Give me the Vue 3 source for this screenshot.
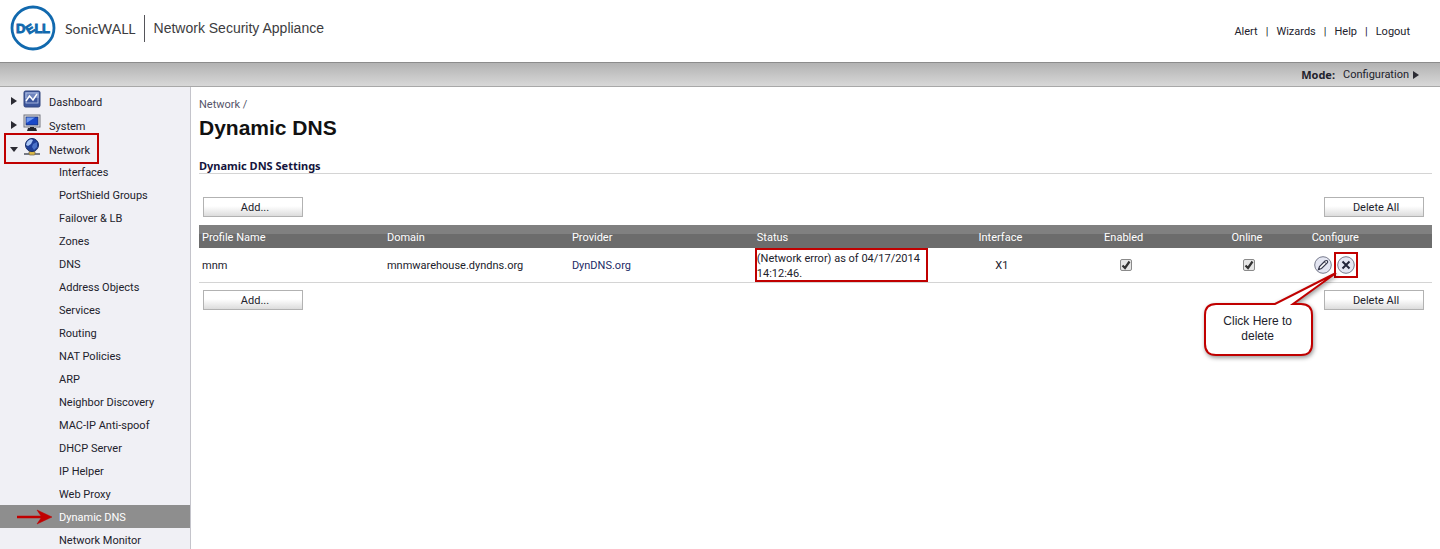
<template>
  <div class="app">
    <header class="top">
      <div class="brand">
        <svg class="logo" width="46" height="46" viewBox="0 0 46 46" role="img" aria-label="Dell">
          <circle cx="23" cy="23" r="21" fill="#fff" stroke="#1169ae" stroke-width="2.800" />
          <g fill="#1169ae" stroke="#1169ae" stroke-width=".9" font-family="Liberation Sans, Arial, sans-serif" font-size="13" font-weight="bold">
            <text x="6" y="28">D</text>
            <text x="15.500" y="28" font-size="12" transform="rotate(-32 20 23)">E</text>
            <text x="24.500" y="28">L</text>
            <text x="32" y="28">L</text>
          </g>
        </svg>
        <span class="brand-name">SonicWALL</span>
        <span class="product">Network Security Appliance</span>
      </div>
      <nav class="top-links">
        <template v-for="(link, i) in topLinks" :key="link">
          <span v-if="i" class="sep">|</span>
          <a href="#">{{ link }}</a>
        </template>
      </nav>
    </header>

    <div class="mode-bar">
      <b>Mode:</b>
      <a href="#">Configuration</a>
      <svg width="6" height="8" viewBox="0 0 6 8"><path d="M0 0L6 4L0 8Z" fill="#2b2b33" /></svg>
    </div>

    <div class="layout">
      <aside class="sidebar">
        <ul class="groups">
          <li>
            <a href="#" class="group">
              <svg class="arrow" width="10" height="10" viewBox="0 0 10 10"><path d="M2 1L8 5L2 9Z" fill="#2b2b33" /></svg>
              <svg class="icon" width="18" height="18" viewBox="0 0 18 18">
                <rect x="1" y="1" width="16" height="16" rx="1.500" fill="#3c569c" stroke="#33467e" />
                <rect x="2" y="2" width="14" height="6" fill="#8fa3d2" opacity=".6" />
                <rect x="3" y="3" width="12" height="10" fill="none" stroke="#b9c8ea" stroke-width=".8" />
                <path d="M3 11L6.500 6L10 10L14 4" fill="none" stroke="#fff" stroke-width="1.500" />
              </svg>
              <span>Dashboard</span>
            </a>
          </li>
          <li>
            <a href="#" class="group">
              <svg class="arrow" width="10" height="10" viewBox="0 0 10 10"><path d="M2 1L8 5L2 9Z" fill="#2b2b33" /></svg>
              <svg class="icon" width="18" height="18" viewBox="0 0 18 18">
                <rect x="1" y="1" width="16" height="12" fill="#dfe1e6" stroke="#72757f" />
                <rect x="3" y="3" width="12" height="8" fill="#1a49c8" stroke="#1c2b60" stroke-width=".7" />
                <path d="M3.500 3.500H12L3.500 9Z" fill="#6f9af0" />
                <path d="M7 13H11V14H13L14 17H4L5 14H7Z" fill="#25262b" />
              </svg>
              <span>System</span>
            </a>
          </li>
          <li>
            <a href="#" class="group marked">
              <svg class="arrow" width="10" height="10" viewBox="0 0 10 10"><path d="M1 3H9L5 8Z" fill="#2b2b33" /></svg>
              <svg class="icon" width="18" height="18" viewBox="0 0 18 18">
                <path d="M1 16H17" stroke="#777b85" stroke-width="2" />
                <rect x="6" y="13" width="6" height="4" rx="1" fill="#d7b647" stroke="#6b6350" stroke-width=".7" />
                <circle cx="9" cy="7" r="6.500" fill="#1f3f98" stroke="#152c66" />
                <path d="M4 4Q7 0 10 2L8 6L5 8L3 7Z" fill="#a9c5f4" />
                <path d="M10 6L14 4L14 9L11 12L9 9Z" fill="#4a72c8" />
              </svg>
              <span>Network</span>
            </a>
          </li>
        </ul>
        <ul class="pages">
          <li v-for="page in pages" :key="page">
            <a href="#" class="page" :class="{ active: page === current }">
              <svg v-if="page === current" class="pointer" width="36" height="16" viewBox="0 0 36 16">
                <path d="M0 7H24L20 1L35 8L20 15L24 9H0Z" fill="#c00000" stroke="#c00000" stroke-width=".5" />
              </svg>
              {{ page }}
            </a>
          </li>
        </ul>
      </aside>

      <main class="content">
        <div class="crumb">Network /</div>
        <h1>Dynamic DNS</h1>
        <h2>Dynamic DNS Settings</h2>

        <div class="actions">
          <button type="button">Add...</button>
          <button type="button">Delete All</button>
        </div>

        <table>
          <thead>
            <tr>
              <th class="wide">Profile Name</th>
              <th class="wide">Domain</th>
              <th class="wide">Provider</th>
              <th class="wide">Status</th>
              <th class="center">Interface</th>
              <th class="center">Enabled</th>
              <th class="center">Online</th>
              <th>Configure</th>
            </tr>
          </thead>
          <tbody>
            <tr v-for="row in profiles" :key="row.name">
              <td>{{ row.name }}</td>
              <td>{{ row.domain }}</td>
              <td><a href="#" class="provider">{{ row.provider }}</a></td>
              <td class="status"><div class="status-box">{{ row.status }}</div></td>
              <td class="center">{{ row.iface }}</td>
              <td class="check"><input v-model="row.enabled" type="checkbox" aria-label="Enabled"></td>
              <td class="check"><input v-model="row.online" type="checkbox" aria-label="Online"></td>
              <td>
                <div class="tools">
                  <button type="button" class="tool" aria-label="Edit">
                    <svg width="18" height="18" viewBox="0 0 18 18">
                      <circle cx="9" cy="9" r="8.300" fill="#e4e6f2" stroke="#777a8c" />
                      <path d="M4.500 13.500L5.500 10.500L11 5Q12.500 4 13.500 5Q14 6 13 7.200L7.500 12.500Z" fill="#fff" stroke="#35374a" stroke-width="1.200" />
                      <path d="M10.500 6L12.300 7.800M4.500 13.500L6 13" stroke="#35374a" />
                    </svg>
                  </button>
                  <div class="delete-box">
                    <button type="button" class="tool" aria-label="Delete">
                      <svg width="18" height="18" viewBox="0 0 18 18">
                        <circle cx="9" cy="9" r="8.300" fill="#e4e6f2" stroke="#777a8c" />
                        <path d="M5.500 5.500L12.500 12.500M12.500 5.500L5.500 12.500" stroke="#23253a" stroke-width="2" />
                      </svg>
                    </button>
                    <div class="callout">
                      <svg width="140" height="92" viewBox="0 0 140 92">
                        <path
                          d="M13 33H72L133 2L90 33H98Q109 33 109 44V73Q109 84 98 84H13Q2 84 2 73V44Q2 33 13 33Z"
                          fill="#fff" stroke="#c00000" stroke-width="2"
                        />
                      </svg>
                      <p>Click Here to delete</p>
                    </div>
                  </div>
                </div>
              </td>
            </tr>
          </tbody>
        </table>

        <div class="actions below">
          <button type="button">Add...</button>
          <button type="button">Delete All</button>
        </div>
      </main>
    </div>
  </div>
</template>

<script setup>
import { ref } from 'vue'

const topLinks = ['Alert', 'Wizards', 'Help', 'Logout']

const pages = [
  'Interfaces',
  'PortShield Groups',
  'Failover & LB',
  'Zones',
  'DNS',
  'Address Objects',
  'Services',
  'Routing',
  'NAT Policies',
  'ARP',
  'Neighbor Discovery',
  'MAC-IP Anti-spoof',
  'DHCP Server',
  'IP Helper',
  'Web Proxy',
  'Dynamic DNS',
  'Network Monitor'
]
const current = 'Dynamic DNS'

const profiles = ref([
  {
    name: 'mnm',
    domain: 'mnmwarehouse.dyndns.org',
    provider: 'DynDNS.org',
    status: '(Network error) as of 04/17/2014 14:12:46.',
    iface: 'X1',
    enabled: true,
    online: true
  }
])
</script>

<style>
html {
  overflow: hidden;
}
</style>

<style scoped>
.app {
  font-family: Tahoma, Roboto, sans-serif;
  font-size: 11px;
  line-height: 15px;
  color: #22222c;
  background: #fff;
}

a {
  color: inherit;
  text-decoration: none;
}

ul {
  list-style: none;
  margin: 0;
  padding: 0;
}

.top {
  display: flex;
  justify-content: space-between;
  height: 62px;
}
.brand {
  display: flex;
  align-items: center;
  height: 56px;
  padding-left: 10px;
  color: #3c3c40;
}
.brand-name {
  margin-left: 9px;
  padding-right: 8px;
  font-family: Lato, sans-serif;
  font-size: 14px;
  line-height: 27px;
  border-right: 1px solid #55555a;
}
.product {
  margin-left: 9px;
  font-family: "Liberation Sans", Arial, sans-serif;
  font-size: 14px;
}
.top-links {
  display: flex;
  align-items: center;
  gap: 8px;
  height: 62px;
  padding-right: 30px;
}

.mode-bar {
  display: flex;
  align-items: center;
  justify-content: flex-end;
  box-sizing: border-box;
  height: 25px;
  padding-right: 21px;
  border-top: 1px solid #8c8c8c;
  border-bottom: 1px solid #a8a8a8;
  background: linear-gradient(#b2b2b2, #d8d8d8);
}
.mode-bar a {
  margin: 0 4px 0 8px;
}

.layout {
  display: flex;
}
.sidebar {
  flex: none;
  width: 190px;
  padding-top: 1px;
  background: #f0f0f5;
  border-right: 1px solid #c4c4cb;
}
.group {
  position: relative;
  display: flex;
  align-items: center;
  height: 24px;
  padding-left: 9px;
}
.group .arrow {
  margin-top: 2px;
}
.group .icon {
  margin: 0 8px 3px 4px;
}
.group span {
  padding-top: 5px;
}
.marked::after {
  content: "";
  position: absolute;
  inset: -3px 91px -4px 4px;
  border: 2px solid #c00000;
}
.page {
  position: relative;
  display: block;
  padding: 2px 0 0 59px;
  line-height: 21px;
}
.page.active {
  color: #fff;
  background: #8e8e8e;
}
.pointer {
  position: absolute;
  left: 17px;
  top: 4px;
}

.content {
  flex: 1;
  padding: 10px 8px 0;
}
.crumb {
  color: #55556a;
}
h1 {
  margin: 3px 0 0;
  font-family: "Liberation Sans", Arial, sans-serif;
  font-size: 21px;
  line-height: 26px;
  color: #111;
}
h2 {
  margin: 17px 0 0;
  font-size: 11px;
  line-height: 15px;
  color: #14143c;
  border-bottom: 1px solid #d4d4d4;
}
h2,
.mode-bar b {
  font-family: Tahoma, "Noto Sans", sans-serif;
}

.actions {
  display: flex;
  justify-content: space-between;
  padding: 23px 8px 8px 4px;
}
.actions.below {
  padding-top: 7px;
}
.actions button {
  width: 100px;
  height: 20px;
  padding: 0 0 0 4px;
  font-family: inherit;
  font-size: 11px;
  color: #22222c;
  border: 1px solid #b2b2b2;
  background: linear-gradient(#fff 45%, #dcdcdc);
}

table {
  width: 100%;
  table-layout: fixed;
  border-collapse: collapse;
}
th {
  box-sizing: border-box;
  width: 10%;
  height: 23px;
  padding: 2px 3px 0;
  font-weight: normal;
  text-align: left;
  color: #fff;
}
th.wide {
  width: 15%;
}
thead {
  background: linear-gradient(#808080 40%, #6c6c6c 40%);
}
td {
  height: 34px;
  padding: 0 3px;
  border-bottom: 1px solid #d4d4d4;
}
.center {
  text-align: center;
}
td.center {
  padding-left: 6px;
}
td.check {
  padding-left: 8px;
}
td input {
  display: block;
  appearance: none;
  width: 12px;
  height: 12px;
  margin: 0 auto;
  border: 1px solid #8a8a8a;
  border-radius: 2px;
  background: #e6e6e6;
}
td input:checked {
  background: #e6e6e6 url("data:image/svg+xml,%3Csvg xmlns='http://www.w3.org/2000/svg' viewBox='0 0 10 10'%3E%3Cpath d='M1.500 5.500L4 8L8.500 1.500' fill='none' stroke='%23333' stroke-width='2.200'/%3E%3C/svg%3E");
}
.provider {
  color: #1c2a66;
}
td.status {
  padding: 0 0 0 1px;
}
.status-box {
  box-sizing: border-box;
  width: 173px;
  height: 34px;
  padding-top: 1px;
  border: 2px solid #c00000;
}

.tools {
  display: flex;
  align-items: center;
  gap: 2px;
  padding-left: 2px;
}
.tool {
  display: block;
  width: 18px;
  height: 18px;
  padding: 0;
  border: 0;
  background: none;
}
.tool svg {
  display: block;
}
.delete-box {
  position: relative;
  padding: 2px 1px;
  border: 2px solid #c00000;
}
.callout {
  position: absolute;
  left: -133px;
  top: 17px;
  width: 140px;
}
.callout svg {
  display: block;
  filter: drop-shadow(1px 2px 2px rgba(0, 0, 0, 0.4));
}
.callout p {
  position: absolute;
  left: 12px;
  top: 43px;
  width: 86px;
  margin: 0;
  font-family: "Liberation Sans", Arial, sans-serif;
  font-size: 12px;
  text-align: center;
}
</style>
